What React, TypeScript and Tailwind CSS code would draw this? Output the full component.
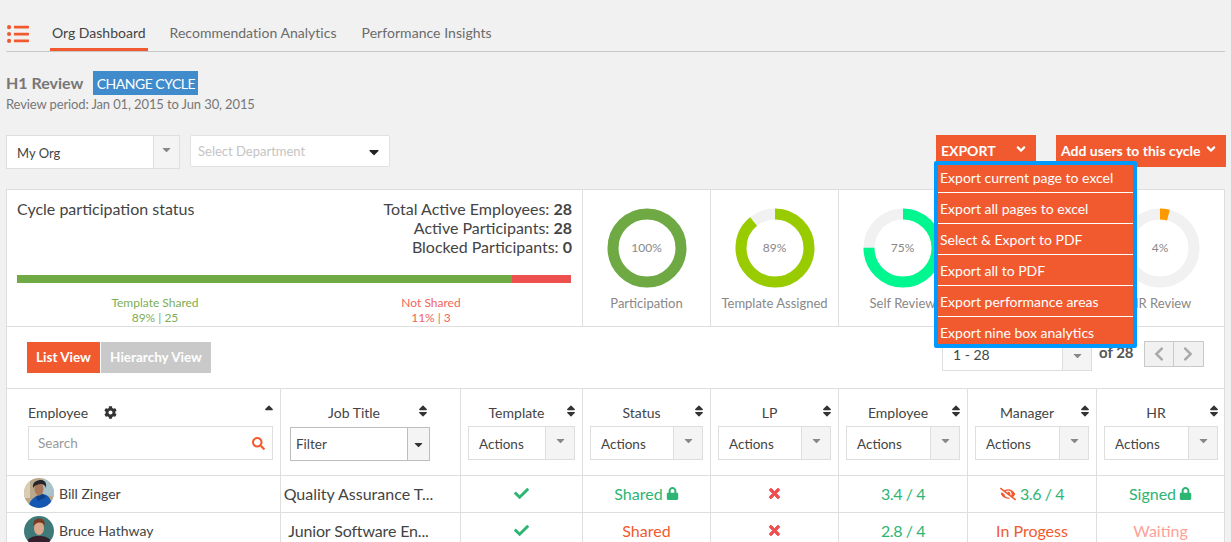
import { FaAngleDown, FaCaretDown, FaCheck, FaChevronLeft, FaChevronRight, FaCog, FaEyeSlash, FaListUl, FaLock, FaSearch, FaSort, FaSortUp, FaTimes } from "react-icons/fa";

const rowCols = "grid-cols-[274px_180px_122px_128px_128px_129px_129px_1fr]";
const cell = "flex items-center justify-center";
const cellLine = "flex items-center justify-center border-r border-[#dedede]";

const exportItems = [
  "Export current page to excel",
  "Export all pages to excel",
  "Select & Export to PDF",
  "Export all to PDF",
  "Export performance areas",
  "Export nine box analytics",
];

const donuts = [
  { label: "Participation", pct: 100, color: "#6ea944", width: "w-[128px]" },
  { label: "Template Assigned", pct: 89, color: "#99cc00", width: "w-[128px]" },
  { label: "Self Review", pct: 75, color: "#00f78f", width: "w-[128px]" },
];

const actionCols = ["Status", "LP", "Employee", "Manager", "HR"];

const Donut = ({ pct, color }: { pct: number; color: string }) => {
  const r = 34;
  const c = 2 * Math.PI * r;
  return (
    <div className="relative h-[80px] w-[80px]">
      <svg viewBox="0 0 80 80" className="h-[80px] w-[80px] -rotate-90">
        <circle cx="40" cy="40" r={r} fill="none" stroke="#f1f1f1" strokeWidth="11" />
        <circle cx="40" cy="40" r={r} fill="none" stroke={color} strokeWidth="11" strokeDasharray={`${(c * pct) / 100} ${c}`} />
      </svg>
      <div className="absolute inset-0 flex items-center justify-center text-[12px] text-[#888]">{pct}%</div>
    </div>
  );
};

const ActionSelect = () => (
  <div className="flex h-[34px] w-full border border-[#dedede] bg-white text-[13.5px] text-[#444]">
    <div className="flex flex-1 items-center pl-[10px] pt-[2px]">Actions</div>
    <div className="flex w-[29px] items-center justify-center border-l border-[#dedede] bg-[#f4f4f4] pb-[6px] text-[#888]">
      <FaCaretDown size={13} />
    </div>
  </div>
);

const HeadLabel = ({ children, shift = "pr-[10px]", sortAt = "right-[-3px]" }: { children: string; shift?: string; sortAt?: string }) => (
  <div className={`relative flex h-[37px] items-center justify-center pb-[1px] pt-[11px] text-[14px] text-[#444] ${shift}`}>
    {children}
    <FaSort size={14} className={`absolute ${sortAt} top-[15px] text-[#333]`} />
  </div>
);

const Avatar = ({ kind }: { kind: "bill" | "bruce" }) =>
  kind === "bill" ? (
    <svg viewBox="0 0 30 30" className="h-[30px] w-[30px] shrink-0 rounded-full">
      <rect width="30" height="30" fill="#b9a88c" />
      <rect x="19" width="11" height="18" fill="#a8c2c9" />
      <rect width="6" height="20" fill="#d9cdb4" />
      <path d="M4 30c1-8 8-13 14-14 5 0 10 4 10 14z" fill="#1458b4" />
      <path d="M12 19l7-3 3 3-8 4z" fill="#0e3f8a" />
      <ellipse cx="15" cy="11" rx="4.5" ry="6.5" fill="#a9795c" />
      <path d="M9 10c-1-6 4-8 8-8 3 0 6 2 5 8-1-3-3-4-5-4-3 0-6 1-8 4z" fill="#24262b" />
    </svg>
  ) : (
    <svg viewBox="0 0 30 30" className="h-[30px] w-[30px] shrink-0 rounded-full">
      <rect width="30" height="30" fill="#3f7a78" />
      <path d="M2 30c0-7 5-10 13-10s13 3 13 10z" fill="#33222e" />
      <ellipse cx="15" cy="12" rx="5" ry="7" fill="#dba88c" />
      <path d="M9.500 10c-1-6 3-7.500 6-7.500s6 2 5 7c-1-2-3-3-5-3s-4 1-6 3.500z" fill="#7a3b22" />
    </svg>
  );

const App = () => {
  return (
    <div className="h-[542px] w-[1231px] overflow-hidden bg-[#f1f1f1] font-['Lato',sans-serif]">
      {/* Tabs */}
      <div className="mx-[6px] flex h-[52px] items-end border-b border-[#c9c9c9] text-[14px] text-[#6b6b6b]">
        <FaListUl size={22} className="mb-[6px] ml-[1px] text-[#f15a2f]" />
        <div className="ml-[21px] border-b-[3px] border-[#f15a2f] px-[2px] pb-[5px] text-[#444]">Org Dashboard</div>
        <div className="ml-[22px] pb-[8px] tracking-[0.03px]">Recommendation Analytics</div>
        <div className="ml-[25px] pb-[8px] tracking-[0.05px]">Performance Insights</div>
      </div>

      {/* Cycle info */}
      <div className="ml-[6px] mt-[19px]">
        <div className="flex items-center">
          <span className="text-[16px] font-bold text-[#777]">H1 Review</span>
          <span className="ml-[10px] flex h-[24px] w-[105px] items-center justify-center whitespace-nowrap bg-[#3f8bcb] text-[14px] tracking-[-0.5px] text-white">CHANGE CYCLE</span>
        </div>
        <div className="mt-[1px] text-[13px] leading-[16px] tracking-[-0.12px] text-[#777]">Review period: Jan 01, 2015 to Jun 30, 2015</div>
      </div>

      {/* Filters */}
      <div className="ml-[6px] mt-[23px] flex h-[34px] items-start">
        <div className="flex h-[34px] w-[174px] border border-[#dedede] bg-white text-[13px] text-[#444]">
          <div className="flex flex-1 items-center pl-[10px] pt-[3px]">My Org</div>
          <div className="flex w-[26px] items-center justify-center border-l border-[#dedede] bg-[#f4f4f4] pb-[6px] text-[#888]">
            <FaCaretDown size={13} />
          </div>
        </div>
        <div className="ml-[10px] flex h-[32px] w-[200px] items-center justify-between rounded-[2px] border border-[#e2e2e2] bg-white pl-[7px] pr-[7px] pt-[1px] text-[13px] text-[#c4c4c4]">
          Select Department
          <FaCaretDown size={16} className="text-[#222]" />
        </div>
        <div className="relative ml-[546px] flex h-[32px] w-[100px] items-center justify-between bg-[#f15a2f] pb-[2px] pl-[5px] pr-[9px] text-[14px] font-bold text-white">
          EXPORT
          <FaAngleDown size={14} className="mb-[2px] mr-[-1px]" />
          <div className="absolute left-[-2px] top-[26px] z-10 w-[203px] rounded-[2px] border-[4px] border-[#0099ff] bg-[#f15a2f] font-normal">
            {exportItems.map((item, i) => (
              <div
                key={item}
                className={`flex items-center whitespace-nowrap border-white pl-[2px] text-[14px] ${
                  i === 0 ? "h-[28px] border-b pb-[2px]" : i === 5 ? "h-[27px] pt-[4px]" : "h-[31px] border-b"
                }`}
              >
                {item}
              </div>
            ))}
          </div>
        </div>
        <div className="ml-[20px] flex h-[32px] w-[170px] items-center justify-between whitespace-nowrap bg-[#f15a2f] pb-[2px] pl-[5px] pr-[9px] text-[14px] font-bold text-white">
          Add users to this cycle
          <FaAngleDown size={14} className="mb-[2px] mr-[-1px]" />
        </div>
      </div>

      {/* Main panel */}
      <div className="ml-[6px] mt-[20px] w-[1219px] border border-[#dedede] bg-white">
        <div className="flex h-[137px] border-b border-[#dedede]">
          <div className="w-[576px] border-r border-[#dedede] px-[10px] pt-[9px]">
            <div className="flex h-[76px] items-start justify-between text-[16px] leading-[19px] text-[#444]">
              <div>Cycle participation status</div>
              <div className="text-right">
                <div>Total Active Employees: <b className="font-bold">28</b></div>
                <div>Active Participants: <b className="font-bold">28</b></div>
                <div>Blocked Participants: <b className="font-bold">0</b></div>
              </div>
            </div>
            <div className="mr-[1px] flex h-[8px]">
              <div className="w-[495px] bg-[#6ea944]" />
              <div className="flex-1 bg-[#ee5050]" />
            </div>
            <div className="mt-[12px] grid grid-cols-2 pr-[3px] text-center text-[12px] leading-[15px]">
              <div className="text-[#7cae55]">
                <div>Template Shared</div>
                <div>89% | 25</div>
              </div>
              <div className="text-[#f0645c]">
                <div>Not Shared</div>
                <div>11% | 3</div>
              </div>
            </div>
          </div>
          {donuts.map((d) => (
            <div key={d.label} className={`flex ${d.width} flex-col items-center border-r border-[#dedede] pt-[18px]`}>
              <Donut pct={d.pct} color={d.color} />
              <div className="mt-[6px] whitespace-nowrap text-[13px] text-[#888]">{d.label}</div>
            </div>
          ))}
          {/* this cell sits fully behind the export menu */}
          <div className="w-[128px] border-r border-[#dedede]" />
          <div className="flex flex-1 flex-col items-center pl-[1px] pt-[18px]">
            <Donut pct={4} color="#ff9900" />
            <div className="mt-[6px] whitespace-nowrap text-[13px] text-[#888]">HR Review</div>
          </div>
        </div>

        {/* View switch and pager */}
        <div className="flex h-[62px] items-start border-b border-[#dedede]">
          <div className="ml-[20px] mt-[15px] flex h-[31px] items-center text-[13.5px] font-bold text-white">
            <div className="flex h-full w-[73px] items-center justify-center bg-[#f15a2f] pb-[1px]">List View</div>
            <div className="ml-[1px] flex h-full w-[110px] items-center justify-center bg-[#c9c9c9] pb-[1px]">Hierarchy View</div>
          </div>
          <div className="ml-[731px] mt-[12px] flex h-[32px] w-[150px] border border-[#dedede] text-[14px] text-[#444]">
            <div className="flex flex-1 items-center pb-[2px] pl-[10px]">1 - 28</div>
            <div className="flex w-[29px] items-center justify-center border-l border-[#dedede] bg-[#f4f4f4] text-[#888]">
              <FaCaretDown size={13} />
            </div>
          </div>
          <div className="ml-[7px] mt-[14px] text-[15px] font-bold text-[#555]">of 28</div>
          <div className="ml-[10px] mt-[14px] flex h-[26px] w-[60px] border border-[#c9c9c9] bg-[#f1f1f1] text-[#a9a9a9]">
            <div className="flex flex-1 items-center justify-center border-r border-[#c9c9c9]"><FaChevronLeft size={16} /></div>
            <div className="flex flex-1 items-center justify-center"><FaChevronRight size={16} /></div>
          </div>
        </div>

        {/* Table header */}
        <div className={`grid ${rowCols} border-b border-[#dedede]`}>
          <div className="h-[86px] border-r border-[#dedede] pl-[21px] pr-[7px]">
            <div className="relative flex h-[37px] items-center pb-[1px] pt-[11px] text-[14px] text-[#444]">
              Employee
              <FaCog size={13} className="ml-[16px] text-[#333]" />
              <FaSortUp size={14} className="absolute right-[-3px] top-[15px] text-[#333]" />
            </div>
            <div className="flex h-[34px] items-center justify-between border border-[#dedede] pl-[9px] pr-[7px] text-[13.5px] text-[#999]">
              Search
              <FaSearch size={13} className="text-[#f15a2f]" />
            </div>
          </div>
          <div className="h-[86px] border-r border-[#dedede] pl-[9px] pr-[30px]">
            <HeadLabel shift="pr-[12px]" sortAt="right-[0px]">Job Title</HeadLabel>
            <div className="mt-[1px] flex h-[34px] border border-[#bdbdbd] text-[13.5px] text-[#444]">
              <div className="flex flex-1 items-center pl-[5px]">Filter</div>
              <div className="flex w-[22px] items-center justify-center border-l border-[#bdbdbd] bg-[#f4f4f4] text-[#333]">
                <FaCaretDown size={13} />
              </div>
            </div>
          </div>
          <div className="h-[86px] border-r border-[#dedede] pl-[7px] pr-[7px]">
            <HeadLabel>Template</HeadLabel>
            <ActionSelect />
          </div>
          {actionCols.map((col, i) => (
            <div key={col} className={`h-[86px] pl-[7px] ${i < 4 ? "border-r border-[#dedede] pr-[7px]" : "pr-[6px]"}`}>
              <HeadLabel>{col}</HeadLabel>
              <ActionSelect />
            </div>
          ))}
        </div>

        {/* Rows */}
        <div className={`grid h-[37px] ${rowCols} items-stretch border-b border-[#dedede] text-center text-[16px]`}>
          <div className="flex items-center border-r border-[#dedede] pb-[2px] pl-[17px] text-[14px] text-[#444]">
            <Avatar kind="bill" />
            <span className="ml-[5px]">Bill Zinger</span>
          </div>
          <div className={`${cellLine} whitespace-nowrap pb-[1px] pr-[24px] text-[#444]`}>Quality Assurance T...</div>
          <div className={`${cellLine} pb-[2px] text-[#2db573]`}><FaCheck size={15} /></div>
          <div className={`${cellLine} gap-[3px] pb-[1px] text-[#2db573]`}>Shared <FaLock size={13} /></div>
          <div className={`${cellLine} pb-[2px] pr-[1px] text-[#ee5050]`}><FaTimes size={15} stroke="currentColor" strokeWidth={30} /></div>
          <div className={`${cellLine} pb-[1px] tracking-[-0.4px] text-[#2db573]`}>3.4 / 4</div>
          <div className={`${cellLine} gap-[4px] pb-[1px] tracking-[-0.4px] text-[#2db573]`}><FaEyeSlash size={16} className="text-[#f15a2f]" /> 3.6 / 4</div>
          <div className={`${cell} gap-[3px] pb-[1px] text-[#2db573]`}>Signed <FaLock size={13} /></div>
        </div>
        <div className={`grid h-[37px] ${rowCols} items-stretch text-center text-[16px]`}>
          <div className="flex items-center border-r border-[#dedede] pb-[2px] pl-[17px] text-[14px] text-[#444]">
            <Avatar kind="bruce" />
            <span className="ml-[5px]">Bruce Hathway</span>
          </div>
          <div className={`${cellLine} whitespace-nowrap pb-[2px] pr-[24px] tracking-[-0.15px] text-[#444]`}>Junior Software En...</div>
          <div className={`${cellLine} pb-[2px] text-[#2db573]`}><FaCheck size={15} /></div>
          <div className={`${cellLine} pb-[2px] text-[#f15a2f]`}>Shared</div>
          <div className={`${cellLine} pb-[2px] pr-[1px] text-[#ee5050]`}><FaTimes size={15} stroke="currentColor" strokeWidth={30} /></div>
          <div className={`${cellLine} pb-[2px] tracking-[-0.4px] text-[#2db573]`}>2.8 / 4</div>
          <div className={`${cellLine} pb-[2px] text-[#f15a2f]`}>In Progess</div>
          <div className={`${cell} pb-[2px] text-[#ff9f97]`}>Waiting</div>
        </div>
      </div>
    </div>
  );
};

export default App;
